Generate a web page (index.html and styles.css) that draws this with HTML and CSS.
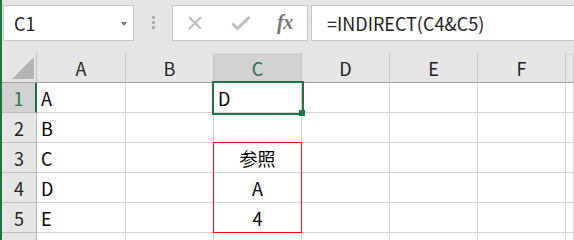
FILE: index.html
```html
<!DOCTYPE html>
<html lang="ja">
<head>
<meta charset="utf-8">
<title>INDIRECT</title>
<link rel="stylesheet" href="styles.css">
</head>
<body>
<div class="app">
  <div class="toolbar">
    <div class="namebox"><span class="name">C1</span><span class="caret"></span></div>
    <div class="grip"><i></i><i></i><i></i></div>
    <div class="fxbox">
      <svg class="ico" width="16" height="14" viewBox="0 0 16 14"><path d="M2 1 L14 13 M14 1 L2 13" stroke="#bdbdbd" stroke-width="2" fill="none"/></svg>
      <svg class="ico" width="20" height="14" viewBox="0 0 20 14"><path d="M1.5 7.5 L6.5 12.5 L18.5 1" stroke="#bdbdbd" stroke-width="3" fill="none"/></svg>
      <span class="fx">fx</span>
    </div>
    <div class="formula">=INDIRECT(C4&amp;C5)</div>
  </div>
  <div class="sheet">
    <div class="corner"><span class="tri"></span></div>
    <div class="colhead">A</div>
    <div class="colhead">B</div>
    <div class="colhead sel">C</div>
    <div class="colhead">D</div>
    <div class="colhead">E</div>
    <div class="colhead">F</div>
    <div class="colhead last"></div>

    <div class="rowhead sel">1</div>
    <div class="cell">A</div><div class="cell"></div><div class="cell">D</div><div class="cell"></div><div class="cell"></div><div class="cell"></div><div class="cell"></div>

    <div class="rowhead">2</div>
    <div class="cell">B</div><div class="cell"></div><div class="cell"></div><div class="cell"></div><div class="cell"></div><div class="cell"></div><div class="cell"></div>

    <div class="rowhead">3</div>
    <div class="cell">C</div><div class="cell"></div><div class="cell center">参照</div><div class="cell"></div><div class="cell"></div><div class="cell"></div><div class="cell"></div>

    <div class="rowhead">4</div>
    <div class="cell">D</div><div class="cell"></div><div class="cell center">A</div><div class="cell"></div><div class="cell"></div><div class="cell"></div><div class="cell"></div>

    <div class="rowhead">5</div>
    <div class="cell">E</div><div class="cell"></div><div class="cell center">4</div><div class="cell"></div><div class="cell"></div><div class="cell"></div><div class="cell"></div>

    <div class="rowhead"></div>
    <div class="cell"></div><div class="cell"></div><div class="cell"></div><div class="cell"></div><div class="cell"></div><div class="cell"></div><div class="cell"></div>

    <div class="selection"><span class="handle"></span></div>
    <div class="refbox"></div>
  </div>
</div>
</body>
</html>
```
FILE: styles.css
```css
html, body {
  margin: 0;
  padding: 0;
  width: 574px;
  height: 240px;
  overflow: hidden;
  background: #e6e6e6;
}
.app {
  height: 240px;
  overflow: hidden;
  border-left: 2px solid #217346;
  font-family: "Noto Sans CJK JP", "Noto Sans", sans-serif;
  color: #000;
}
.toolbar {
  height: 53px;
  box-sizing: border-box;
  padding: 5px 0 0 1px;
  display: flex;
  align-items: flex-start;
}
.namebox, .fxbox, .formula {
  height: 36px;
  box-sizing: border-box;
  background: #fff;
  border: 1px solid #c6c6c6;
  display: flex;
  align-items: center;
}
.namebox {
  width: 131px;
  padding: 0 6px 0 10px;
  justify-content: space-between;
}
.name {
  font-size: 18px;
  color: #222;
  line-height: 1;
}
.caret {
  width: 0;
  height: 0;
  border-left: 3.5px solid transparent;
  border-right: 3.5px solid transparent;
  border-top: 4px solid #777;
  margin-top: 1px;
}
.grip {
  width: 38px;
  height: 36px;
  display: flex;
  flex-direction: column;
  align-items: center;
  justify-content: center;
  gap: 2px;
  margin-top: -1px;
}
.grip i {
  display: block;
  width: 3px;
  height: 3px;
  background: #b0b0b0;
}
.fxbox {
  width: 136px;
  padding-left: 14px;
}
.fxbox .ico:first-child {
  margin-right: 28px;
}
.fxbox .ico:nth-child(2) {
  margin-right: 26px;
}
.fx {
  font-family: "Liberation Serif", serif;
  font-style: italic;
  font-weight: bold;
  font-size: 20px;
  color: #777;
  line-height: 1;
  margin-top: -2px;
  letter-spacing: -0.5px;
}
.formula {
  flex: 1;
  margin-left: 3px;
  padding-left: 15px;
  font-size: 18px;
  color: #222;
  white-space: nowrap;
  border-right: none;
}
.sheet {
  position: relative;
  display: grid;
  grid-template-columns: 35px 89px 88px 88px 88px 88px 88px 1fr;
  grid-auto-rows: 30px;
  background: #fff;
}
.corner, .colhead, .rowhead, .cell {
  box-sizing: border-box;
}
.corner {
  background: #e6e6e6;
  border-right: 1px solid #c0c0c0;
  border-bottom: 1px solid #9e9e9e;
  display: flex;
  justify-content: flex-end;
  align-items: flex-end;
  padding: 0 2px 3px 0;
}
.tri {
  display: block;
  width: 22px;
  height: 22px;
  background: #b4b4b4;
  clip-path: polygon(100% 0, 100% 100%, 0 100%);
}
.colhead {
  background: #e6e6e6;
  border-right: 1px solid #c6c6c6;
  border-bottom: 1px solid #9e9e9e;
  display: flex;
  align-items: center;
  justify-content: center;
  font-size: 18px;
  color: #222;
  line-height: 1;
}
.colhead.sel, .rowhead.sel {
  background: #d2d2d2;
  color: #217346;
}
.rowhead {
  background: #e6e6e6;
  border-right: 1px solid #b4b4b4;
  border-bottom: 1px solid #bdbdbd;
  display: flex;
  align-items: center;
  justify-content: center;
  font-size: 18px;
  color: #222;
  line-height: 1;
}
.rowhead.sel {
  border-right: 2px solid #217346;
}
.cell {
  border-right: 1px solid #d4d4d4;
  border-bottom: 1px solid #d4d4d4;
  display: flex;
  align-items: center;
  padding-left: 4px;
  font-size: 18px;
  line-height: 1;
  white-space: nowrap;
}
.cell.center {
  justify-content: center;
  padding-left: 0;
}
.selection {
  position: absolute;
  grid-column: 4 / 5;
  grid-row: 2 / 3;
  top: -2px;
  left: -2px;
  right: -2px;
  bottom: -2px;
  border: 2px solid #217346;
  z-index: 2;
}
.handle {
  position: absolute;
  right: -3px;
  bottom: -3px;
  width: 6px;
  height: 6px;
  background: #217346;
}
.refbox {
  position: absolute;
  grid-column: 4 / 5;
  grid-row: 4 / 7;
  top: -1px;
  left: -1px;
  right: 0;
  bottom: 0;
  border: 1px solid #ff0000;
  z-index: 1;
}
```
